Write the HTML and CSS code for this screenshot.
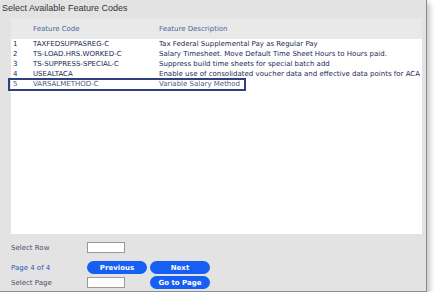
FILE: index.html
```html
<!DOCTYPE html>
<html lang="en">
<head>
  <meta charset="UTF-8" />
  <title>Select Available Feature Codes</title>
  <link rel="stylesheet" href="styles.css">
</head>
<body>
  <div class="panel">
    <div class="title">Select Available Feature Codes</div>

    <div class="list">
      <table class="codes">
        <colgroup>
          <col class="col-num">
          <col class="col-code">
          <col>
        </colgroup>
        <thead>
          <tr>
            <th></th>
            <th>Feature Code</th>
            <th>Feature Description</th>
          </tr>
        </thead>
        <tbody>
          <tr><td>1</td><td>TAXFEDSUPPASREG-C</td><td>Tax Federal Supplemental Pay as Regular Pay</td></tr>
          <tr><td>2</td><td>TS-LOAD.HRS.WORKED-C</td><td>Salary Timesheet. Move Default Time Sheet Hours to Hours paid.</td></tr>
          <tr><td>3</td><td>TS-SUPPRESS-SPECIAL-C</td><td>Suppress build time sheets for special batch add</td></tr>
          <tr><td>4</td><td>USEALTACA</td><td>Enable use of consolidated voucher data and effective data points for ACA</td></tr>
          <tr class="selected"><td>5</td><td>VARSALMETHOD-C</td><td>Variable Salary Method</td></tr>
        </tbody>
      </table>
    </div>

    <!-- callout box drawn over the selected row -->
    <div class="callout"></div>

    <div class="footer">
      <div class="frow first">
        <label class="lbl">Select Row</label>
        <input type="text" class="field" />
      </div>
      <div class="frow">
        <div class="lbl pager">Page 4 of <b>4</b></div>
        <button class="btn">Previous</button>
        <button class="btn">Next</button>
      </div>
      <div class="frow last">
        <label class="lbl">Select Page</label>
        <input type="text" class="field" />
        <button class="btn">Go to Page</button>
      </div>
    </div>
  </div>
</body>
</html>
```

FILE: styles.css
```css
* {
  margin: 0;
  padding: 0;
  box-sizing: border-box;
}

body {
  background: #fff;
  font-family: "DejaVu Sans", Verdana, sans-serif;
}

.panel {
  position: relative;
  width: 427px;
  height: 292px;
  background: #e3e3e3;
  border-right: 1px solid #8c8c8c;
  border-bottom: 1px solid #8c8c8c;
  box-shadow: 3px 3px 5px rgba(0, 0, 0, 0.22);
  display: flex;
  flex-direction: column;
}

.title {
  height: 18px;
  padding: 2px 0 0 2px;
  font-family: "Liberation Sans", Arial, sans-serif;
  font-size: 9px;
  line-height: 12px;
  color: #333;
}

.list {
  margin: 0 4px 0 11px;
  height: 216px;
  background: #fff;
  overflow: hidden;
}

.codes {
  width: 412px;
  table-layout: fixed;
  border-collapse: collapse;
  font-size: 7px;
  color: #1b2a55;
  white-space: nowrap;
}

.col-num {
  width: 22px;
}

.col-code {
  width: 126px;
}

.codes th {
  height: 21px;
  background: #e9e9e9;
  font-weight: normal;
  text-align: left;
  color: #4a6a9a;
  padding-top: 1px;
}

.codes td {
  height: 10px;
  line-height: 10px;
  overflow: visible;
}

.codes td:first-child {
  padding-left: 2px;
}

.codes tr.selected td {
  color: #4a5a82;
}

.callout {
  position: absolute;
  left: 8px;
  top: 78px;
  width: 238px;
  height: 13px;
  border: 2px solid #2f3f7f;
}

.footer {
  padding: 8px 0 0 11px;
}

.frow {
  display: grid;
  grid-template-columns: 73px 60px 60px;
  column-gap: 3px;
  align-items: center;
  height: 13px;
}

.frow.first {
  height: 11px;
  margin-bottom: 8px;
}

.frow.last {
  margin-top: 2px;
}

.lbl {
  font-size: 7px;
  color: #4a5069;
}

.pager {
  color: #2c5aa8;
}

.pager b {
  font-weight: normal;
  color: #1a4fd6;
}

.field {
  width: 38px;
  height: 11px;
  background: #fff;
  border: 1px solid #999;
}

.btn {
  height: 13px;
  border: none;
  border-radius: 7px;
  background: #175ef2;
  color: #fff;
  font-family: "DejaVu Sans", Verdana, sans-serif;
  font-weight: bold;
  font-size: 7px;
}
```
